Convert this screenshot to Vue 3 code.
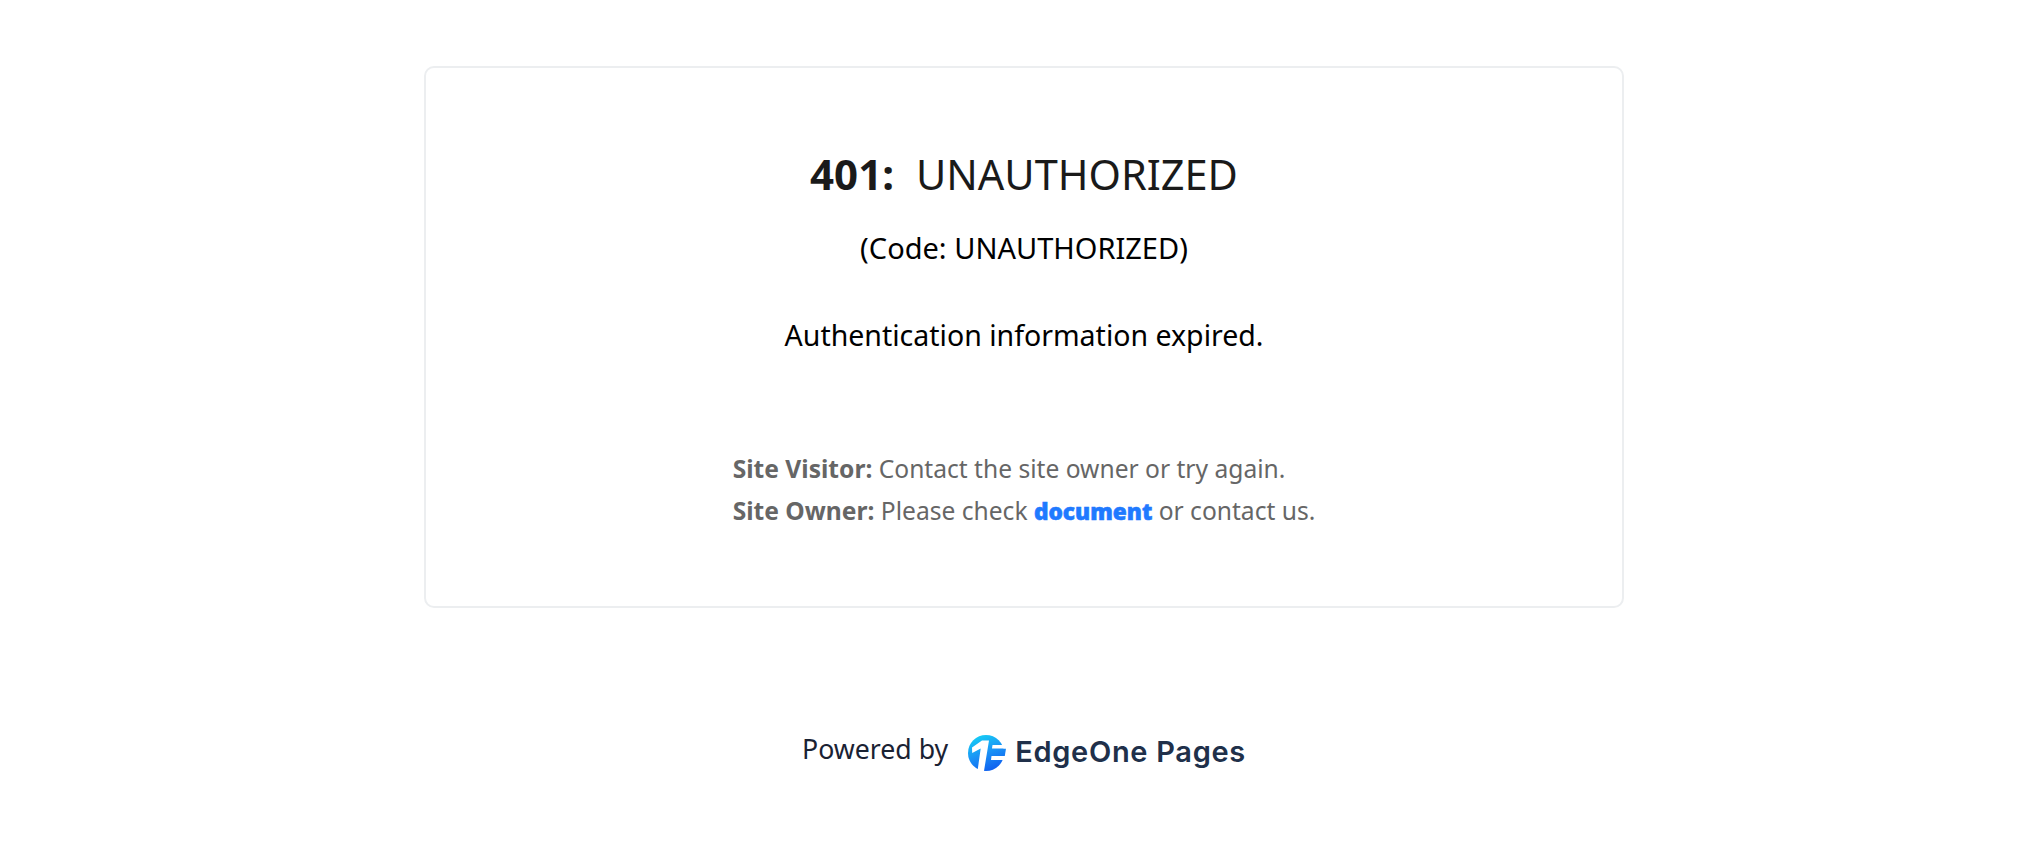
<script setup>
const title = 'UNAUTHORIZED'
</script>

<template>
  <div class="page">
    <main class="card">
      <h1 class="title"><strong>401:</strong><span>{{ title }}</span></h1>
      <p class="code">(Code: {{ title }})</p>
      <p class="message">Authentication information expired.</p>
      <div class="help">
        <p><strong>Site Visitor:</strong> Contact the site owner or try again.</p>
        <p><strong>Site Owner:</strong> Please check <a href="#" class="doc">document</a> or contact us.</p>
      </div>
    </main>
    <footer class="footer">
      <span class="powered">Powered by</span>
      <span class="brand">
        <svg class="logo" width="38" height="36" viewBox="0 0 38 36" aria-hidden="true">
          <defs>
            <linearGradient id="edge" gradientUnits="userSpaceOnUse" x1="6" y1="2" x2="20" y2="36">
              <stop offset="0" stop-color="#16cdf5" />
              <stop offset="0.55" stop-color="#1a90f5" />
              <stop offset="1" stop-color="#0f62f0" />
            </linearGradient>
          </defs>
          <circle cx="18" cy="18" r="18" fill="url(#edge)" />
          <path fill="url(#edge)" d="M23 13.500h15l-1.200 7.500H22Z" />
          <path fill="#fff" d="M4 12.500 14 5.500h7L16 36H9.500l3.200-22.500-8.500 4.500Z" />
          <path fill="#fff" d="M24.500 10H38v3.500H24Z" />
          <path fill="#fff" d="M23.500 21H38v4H23Z" />
        </svg>
        <span class="wordmark">EdgeOne Pages</span>
      </span>
    </footer>
  </div>
</template>

<style scoped>
.page {
  padding: 66px 0 0 24px;
  font-family: "Noto Sans", "Open Sans", sans-serif;
  color: #000;
}

.card {
  box-sizing: border-box;
  width: 1200px;
  height: 542px;
  margin: 0 auto;
  padding: 81px 32px 0;
  border: 2px solid #eceef0;
  border-radius: 10px;
  text-align: center;
}

.title {
  display: flex;
  justify-content: center;
  gap: 22px;
  margin: 0;
  font-size: 41.5px;
  line-height: 50px;
  font-weight: 400;
  color: #1a1a1a;
}

.title strong {
  font-size: 42px;
  font-weight: 700;
}

.code {
  margin: 30px 0 0;
  font-size: 29px;
  line-height: 38px;
}

.message {
  margin: 49px 0 0;
  font-size: 28.5px;
  line-height: 38px;
}

.help {
  width: fit-content;
  margin: 94px auto 0;
  font-size: 24.6px;
  line-height: 42px;
  text-align: left;
  color: #666;
}

.help p {
  margin: 0;
}

.doc {
  font-size: 22.6px;
  font-weight: 900;
  color: #1f7aff;
  text-decoration: none;
  -webkit-text-stroke: 0.6px #1f7aff;
}

.footer {
  display: flex;
  justify-content: center;
  align-items: center;
  gap: 20px;
  margin-top: 124px;
}

.powered {
  font-size: 26.7px;
  color: #1a2233;
  margin-top: -6px;
}

.brand {
  display: flex;
  align-items: center;
  gap: 9px;
}

.logo {
  margin-top: 3px;
}

.wordmark {
  font-family: Inter, "Noto Sans", sans-serif;
  font-size: 29px;
  letter-spacing: 0.7px;
  font-weight: 600;
  color: #20304a;
}
</style>
